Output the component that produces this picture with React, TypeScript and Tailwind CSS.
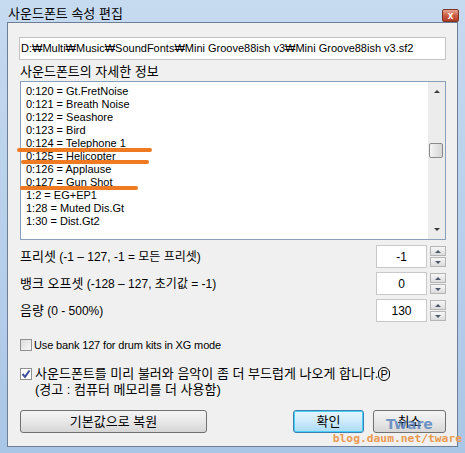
import React from 'react';

const items = [
  '0:120 = Gt.FretNoise',
  '0:121 = Breath Noise',
  '0:122 = Seashore',
  '0:123 = Bird',
  '0:124 = Telephone 1',
  '0:125 = Helicopter',
  '0:126 = Applause',
  '0:127 = Gun Shot',
  '1:2 = EG+EP1',
  '1:28 = Muted Dis.Gt',
  '1:30 = Dist.Gt2',
];

const font = { fontFamily: '"Liberation Sans", "Noto Sans CJK KR", sans-serif' };

const Spin = ({ value }: { value: string }) => (
  <div className="flex items-center gap-[3px]">
    <div className="w-[51px] h-[23px] bg-white border border-[#c9c9c9] flex items-center justify-center text-[12px] text-black">
      {value}
    </div>
    <div className="flex flex-col gap-[1px]">
      <div className="w-[16px] h-[10px] border border-[#b5b5b5] bg-gradient-to-b from-[#f7f7f7] to-[#dcdcdc] flex items-center justify-center">
        <div className="w-0 h-0 border-l-[3px] border-r-[3px] border-b-[3px] border-l-transparent border-r-transparent border-b-[#4d5a70]" />
      </div>
      <div className="w-[16px] h-[10px] border border-[#b5b5b5] bg-gradient-to-b from-[#f7f7f7] to-[#dcdcdc] flex items-center justify-center">
        <div className="w-0 h-0 border-l-[3px] border-r-[3px] border-t-[3px] border-l-transparent border-r-transparent border-t-[#4d5a70]" />
      </div>
    </div>
  </div>
);

export default function App() {
  return (
    <div className="w-[465px] h-[453px] bg-gradient-to-b from-[#c6daf0] to-[#aac6e6] flex flex-col relative overflow-hidden" style={font}>
      <div className="h-[22px] flex items-start justify-between pl-[8px] pr-[6px]">
        <span className="text-[13px] text-black mt-[4px]">사운드폰트 속성 편집</span>
        <div className="w-[17px] h-[13px] mt-[9px] rounded-[2px] border border-[#7a3426] bg-gradient-to-b from-[#e9a593] via-[#cc5d45] to-[#b53c24] flex items-center justify-center">
          <span className="text-white text-[10px] font-bold leading-none">x</span>
        </div>
      </div>
      <div className="flex-1 mx-[7px] mb-[6px] border border-[#6c7f96] bg-[#f0f0f0] flex flex-col pl-[11px] pr-[11px] text-[12px] text-black">
        <div className="mt-[14px] h-[23px] bg-white border border-[#c4c4c4] flex items-center pl-[1px] text-[11px] whitespace-nowrap">
          D:₩Multi₩Music₩SoundFonts₩Mini Groove88ish v3₩Mini Groove88ish v3.sf2
        </div>
        <div className="mt-[3px] h-[18px] flex items-center pl-[1px] text-[13px]">사운드폰트의 자세한 정보</div>
        <div className="h-[159px] ml-[1px] border border-[#8aa0b8] bg-white flex">
          <div className="flex-1 flex flex-col pt-[3px] pl-[5px]">
            {items.map((t) => (
              <div key={t} className="h-[13px] leading-[13px] text-[11px] whitespace-nowrap">
                {t}
              </div>
            ))}
          </div>
          <div className="w-[17px] bg-[#ececec] flex flex-col items-center justify-between py-[8px] relative">
            <div className="w-0 h-0 border-l-[3px] border-r-[3px] border-b-[3px] border-l-transparent border-r-transparent border-b-[#3a3a3a]" />
            <div className="absolute left-[1px] top-[61px] w-[14px] h-[15px] rounded-[2px] border border-[#8a8a8a] bg-gradient-to-r from-[#f4f4f4] to-[#d6d6d6]" />
            <div className="w-0 h-0 border-l-[3px] border-r-[3px] border-t-[3px] border-l-transparent border-r-transparent border-t-[#3a3a3a]" />
          </div>
        </div>
        <div className="mt-[5px] flex flex-col gap-[4px]">
          <div className="flex items-center justify-between">
            <span className="pl-[1px]">
              <span className="text-[13px]">프리셋</span> (-1 – 127, -1 = 모든 프리셋)
            </span>
            <Spin value="-1" />
          </div>
          <div className="flex items-center justify-between">
            <span className="pl-[1px]">
              <span className="text-[13px]">뱅크 오프셋</span> (-128 – 127, 초기값 = -1)
            </span>
            <Spin value="0" />
          </div>
          <div className="flex items-center justify-between">
            <span className="pl-[1px]">
              <span className="text-[13px]">음량</span> (0 - 500%)
            </span>
            <Spin value="130" />
          </div>
        </div>
        <div className="mt-[15px] flex items-center gap-[2px] pl-[1px]">
          <div className="w-[12px] h-[12px] border border-[#8f8f8f] bg-gradient-to-br from-[#dcdcdc] to-[#f8f8f8]" />
          <span className="text-[11px] tracking-[-0.15px]">Use bank 127 for drum kits in XG mode</span>
        </div>
        <div className="mt-[12px] flex items-start gap-[3px] pl-[1px]">
          <div className="mt-[2px] w-[12px] h-[12px] border border-[#8f8f8f] bg-white flex items-center justify-center">
            <svg width="10" height="10" viewBox="0 0 10 10">
              <path d="M1.5 5 L4 7.8 L8.5 1.5" stroke="#3b4f9a" strokeWidth="2" fill="none" />
            </svg>
          </div>
          <div className="text-[13px] leading-[16px]">
            <div>
              사운드폰트를 미리 불러와 음악이 좀 더 부드럽게 나오게 합니다.<span className="text-[11px] border border-black rounded-full px-[1px] leading-none">P</span>
            </div>
            <div>(경고 : 컴퓨터 메모리를 더 사용함)</div>
          </div>
        </div>
        <div className="mt-auto mb-[13px] flex items-center">
          <button className="w-[187px] h-[23px] ml-[1px] rounded-[3px] border border-[#707070] bg-gradient-to-b from-[#f4f4f4] via-[#e8e8e8] to-[#d6d6d6] text-[13px]">
            기본값으로 복원
          </button>
          <button className="ml-auto w-[71px] h-[23px] rounded-[3px] border border-[#3c7fb1] bg-gradient-to-b from-[#e6f5fd] via-[#cdeafa] to-[#a9dbf6] text-[13px] shadow-[inset_0_0_0_1px_#48d0f8]">
            확인
          </button>
          <button className="ml-[9px] w-[73px] h-[23px] rounded-[3px] border border-[#707070] bg-gradient-to-b from-[#f4f4f4] via-[#e8e8e8] to-[#d6d6d6] text-[13px]">
            취소
          </button>
        </div>
      </div>
      {/* orange marks drawn on the screenshot */}
      <div className="absolute left-[17px] top-[148px] w-[135px] h-[4px] rounded-full bg-[#f07a22]" />
      <div className="absolute left-[21px] top-[160px] w-[128px] h-[4px] rounded-full bg-[#f07a22]" />
      <div className="absolute left-[20px] top-[186px] w-[118px] h-[4px] rounded-full bg-[#f07a22]" />
      {/* watermark */}
      <div className="absolute left-[386px] top-[417px] text-[14px] font-bold text-[#4a78b8]/75 leading-none" style={{ fontFamily: '"DejaVu Sans", sans-serif' }}>
        Tware
      </div>
      <div className="absolute right-[3px] top-[433px] text-[11.3px] font-bold text-[#e99a55] leading-none" style={{ fontFamily: '"DejaVu Sans Mono", monospace' }}>
        blog.daum.net/tware
      </div>
    </div>
  );
}
